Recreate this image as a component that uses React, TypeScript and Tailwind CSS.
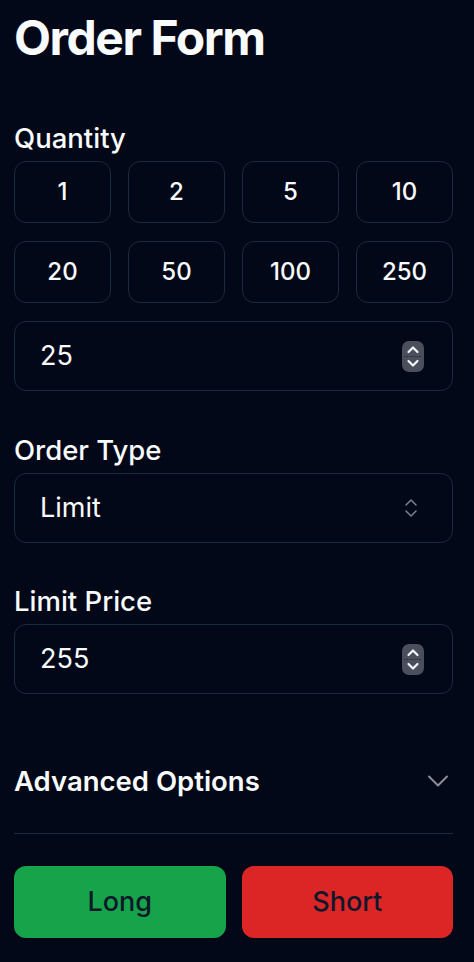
import { ChevronDown, ChevronsUpDown } from "lucide-react"

const quickAmounts = [1, 2, 5, 10, 20, 50, 100, 250]

function Spinner() {
  return (
    <svg width="22" height="31" viewBox="0 0 22 31" className="shrink-0">
      <rect x="0" y="0" width="22" height="31" rx="7" fill="#4b4f5c" />
      <line x1="2" y1="15.5" x2="20" y2="15.5" stroke="#2a2d38" strokeWidth="1" strokeDasharray="1.5 1" />
      <path d="M6.5 11 L11 6.5 L15.5 11" fill="none" stroke="#f1f5f9" strokeWidth="2.2" strokeLinecap="round" strokeLinejoin="round" />
      <path d="M6.5 20 L11 24.5 L15.5 20" fill="none" stroke="#f1f5f9" strokeWidth="2.2" strokeLinecap="round" strokeLinejoin="round" />
    </svg>
  )
}

function NumberField({ value }: { value: string }) {
  return (
    <div className="flex h-[70px] items-center justify-between rounded-[12px] border-[1.5px] border-[#1e293b] pl-[25px] pr-[28px]">
      <span className="text-[27px] text-[#f8fafc]">{value}</span>
      <Spinner />
    </div>
  )
}

function Label({ children }: { children: React.ReactNode }) {
  return <div className="text-[27.5px] leading-[32px] font-medium text-[#f8fafc]">{children}</div>
}

export default function App() {
  return (
    <div
      className="min-h-screen bg-[#020817] pl-[14px] pr-[21px] pt-[14px] text-[#f8fafc]"
      style={{ fontFamily: "Inter, 'Noto Sans', sans-serif" }}
    >
      <h1 className="text-[48px] leading-[48px] font-bold tracking-[-0.03em]">Order Form</h1>

      {/* quantity */}
      <div className="mt-[60px]">
        <Label>Quantity</Label>
        <div className="mt-[7px] grid grid-cols-4 gap-x-[17px] gap-y-[18px]">
          {quickAmounts.map((amount) => (
            <button
              key={amount}
              className="flex h-[62px] items-center justify-center rounded-[12px] border-[1.5px] border-[#1e293b] text-[24px] font-medium text-[#f8fafc]"
            >
              {amount}
            </button>
          ))}
        </div>
        <div className="mt-[18px]">
          <NumberField value="25" />
        </div>
      </div>

      {/* order type */}
      <div className="mt-[43px]">
        <Label>Order Type</Label>
        <div className="mt-[7px] flex h-[70px] items-center justify-between rounded-[12px] border-[1.5px] border-[#1e293b] pl-[25px] pr-[29px]">
          <span className="text-[27px] text-[#f8fafc]">Limit</span>
          <ChevronsUpDown className="h-6 w-6 text-[#7c818c]" strokeWidth={1.5} />
        </div>
      </div>

      {/* limit price */}
      <div className="mt-[42px]">
        <Label>Limit Price</Label>
        <div className="mt-[7px]">
          <NumberField value="255" />
        </div>
      </div>

      {/* advanced */}
      <div className="mt-[45px] border-b-[1.5px] border-[#1e293b]">
        <button className="flex w-full items-center justify-between pt-[24px] pb-[34px]">
          <span className="text-[27.5px] leading-[36px] font-semibold text-[#f8fafc]">Advanced Options</span>
          <ChevronDown className="-mr-[3px] h-9 w-9 text-[#8b8f99]" strokeWidth={1.3} />
        </button>
      </div>

      <div className="mt-[32px] flex gap-[16px]">
        <button className="h-[72px] flex-1 rounded-[12px] bg-[#16a34a] text-[27px] font-medium text-[#0f172a]">
          Long
        </button>
        <button className="h-[72px] flex-1 rounded-[12px] bg-[#dc2626] text-[27px] font-medium text-[#0f172a]">
          Short
        </button>
      </div>
    </div>
  )
}
